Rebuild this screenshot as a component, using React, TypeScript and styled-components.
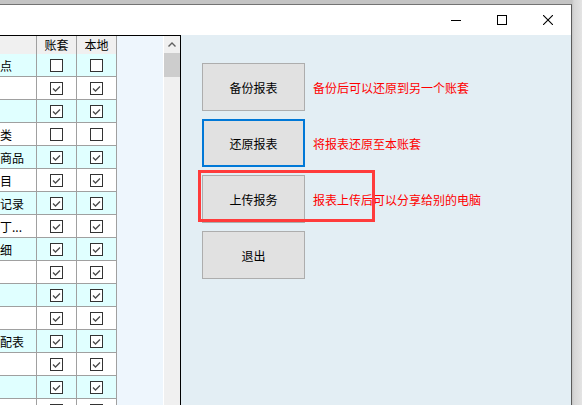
import React from 'react'
import styled, { createGlobalStyle } from 'styled-components'

type Item = { name: string; book: boolean; local: boolean }

// visible tail of each name: the grid is scrolled to the right
const items: Item[] = [
  { name: '点', book: false, local: false },
  { name: '', book: true, local: true },
  { name: '', book: true, local: true },
  { name: '类', book: false, local: false },
  { name: '商品', book: true, local: true },
  { name: '目', book: true, local: true },
  { name: '记录', book: true, local: true },
  { name: '丁...', book: true, local: true },
  { name: '细', book: true, local: true },
  { name: '', book: true, local: true },
  { name: '', book: true, local: true },
  { name: '', book: true, local: true },
  { name: '配表', book: true, local: true },
  { name: '', book: true, local: true },
  { name: '', book: true, local: true },
  { name: '点', book: true, local: true },
]

const actions = [
  { label: '备份报表', hint: '备份后可以还原到另一个账套', focused: false },
  { label: '还原报表', hint: '将报表还原至本账套', focused: true },
  { label: '上传报务', hint: '报表上传后可以分享给别的电脑', focused: false },
  { label: '退出', hint: '', focused: false },
]

const CheckBox = ({ checked }: { checked: boolean }) => (
  <svg width='13' height='13' viewBox='0 0 13 13'>
    <rect x='0.5' y='0.5' width='12' height='12' fill='#fff' stroke='#333' />
    {checked && <path d='M3 6.5 L5.5 9 L10 4.5' fill='none' stroke='#4a4a4a' strokeWidth='1.3' />}
  </svg>
)

export default function App() {
  return (
    <>
      <GlobalStyle />
      <Div_Window>
        <Div_TitleBar>
          <Div_Control>
            <svg width='10' height='10' viewBox='0 0 10 10'>
              <path d='M0 5.5 H10' stroke='#000' />
            </svg>
          </Div_Control>
          <Div_Control>
            <svg width='10' height='10' viewBox='0 0 10 10'>
              <rect x='0.5' y='0.5' width='9' height='9' fill='none' stroke='#000' />
            </svg>
          </Div_Control>
          <Div_Control>
            <svg width='10' height='10' viewBox='0 0 10 10'>
              <path d='M0 0 L10 10 M10 0 L0 10' stroke='#000' strokeWidth='1.1' />
            </svg>
          </Div_Control>
        </Div_TitleBar>
        <Div_Content>
          <Div_LeftPanel>
            <Div_GridArea>
              <Div_Table>
                <Div_HeaderRow>
                  <Div_HeaderCell />
                  <Div_HeaderCell>账套</Div_HeaderCell>
                  <Div_HeaderCell>本地</Div_HeaderCell>
                </Div_HeaderRow>
                {items.map((item, i) => (
                  <Div_Row key={i} $striped={i % 2 === 0}>
                    <Div_NameCell>{item.name}</Div_NameCell>
                    <Div_CheckCell>
                      <CheckBox checked={item.book} />
                    </Div_CheckCell>
                    <Div_CheckCell>
                      <CheckBox checked={item.local} />
                    </Div_CheckCell>
                  </Div_Row>
                ))}
              </Div_Table>
            </Div_GridArea>
            <Div_Scrollbar>
              <Div_ScrollArrow>
                <svg width='8' height='5' viewBox='0 0 8 5'>
                  <path d='M0.5 4.5 L4 1 L7.5 4.5' fill='none' stroke='#606060' strokeWidth='1.4' />
                </svg>
              </Div_ScrollArrow>
              <Div_ScrollThumb />
            </Div_Scrollbar>
          </Div_LeftPanel>
          <Div_RightPanel>
            {actions.map(a => (
              <Div_ActionRow key={a.label}>
                <Button_Action $focused={a.focused}>{a.label}</Button_Action>
                {a.hint && <Span_Hint>{a.hint}</Span_Hint>}
              </Div_ActionRow>
            ))}
            <Div_Annotation />
          </Div_RightPanel>
        </Div_Content>
      </Div_Window>
    </>
  )
}

const GlobalStyle = createGlobalStyle`
  html, body {
    margin: 0;
    padding: 0;
  }
  body {
    width: 582px;
    height: 405px;
    overflow: hidden;
    background: linear-gradient(to right, #c4c4c4 0, #c4c4c4 572px, #d6d6d6 574px, #e4e4e4 582px);
    font-family: "Noto Sans CJK SC", "Noto Sans", sans-serif;
    font-size: 12px;
  }
`

const Div_Window = styled.div`
  margin-top: 4px;
  width: 572px;
  height: 401px;
  box-sizing: border-box;
  border-top: 1px solid #737373;
  border-right: 1px solid #5a5a5a;
  background: #fff;
  display: flex;
  flex-direction: column;
`

const Div_TitleBar = styled.div`
  height: 30px;
  flex-shrink: 0;
  display: flex;
  justify-content: flex-end;
  background: #fff;
`

const Div_Control = styled.div`
  width: 46px;
  height: 30px;
  display: flex;
  align-items: center;
  justify-content: center;
`

const Div_Content = styled.div`
  flex: 1;
  min-height: 0;
  display: flex;
`

const Div_LeftPanel = styled.div`
  width: 181px;
  flex-shrink: 0;
  box-sizing: border-box;
  border-top: 1px solid #000;
  border-right: 1px solid #000;
  display: flex;
  overflow: hidden;
`

const Div_GridArea = styled.div`
  flex: 1;
  background: #eef6fd;
  overflow: hidden;
`

const Div_Table = styled.div`
  width: 117px;
`

const Div_HeaderRow = styled.div`
  display: grid;
  grid-template-columns: 37px 40px 40px;
  height: 18px;
  background: #f0f0f0;
`

const Div_HeaderCell = styled.div`
  box-sizing: border-box;
  border-right: 1px solid #a0a0a0;
  display: flex;
  align-items: center;
  justify-content: center;
  line-height: 1;
  color: #000;
`

const Div_Row = styled.div<{ $striped: boolean }>`
  display: grid;
  grid-template-columns: 37px 40px 40px;
  height: 23px;
  background: ${p => (p.$striped ? '#e0ffff' : '#ffffff')};
`

const Div_NameCell = styled.div`
  box-sizing: border-box;
  border-right: 1px solid #a0a0a0;
  border-bottom: 1px solid #a0a0a0;
  display: flex;
  align-items: center;
  white-space: nowrap;
  color: #000;
`

const Div_CheckCell = styled.div`
  box-sizing: border-box;
  border-right: 1px solid #a0a0a0;
  border-bottom: 1px solid #a0a0a0;
  display: flex;
  align-items: center;
  justify-content: center;
  svg {
    display: block;
  }
`

const Div_Scrollbar = styled.div`
  width: 17px;
  flex-shrink: 0;
  box-sizing: border-box;
  border-left: 1px solid #fff;
  background: #f0f0f0;
  display: flex;
  flex-direction: column;
`

const Div_ScrollArrow = styled.div`
  height: 17px;
  display: flex;
  align-items: center;
  justify-content: center;
`

const Div_ScrollThumb = styled.div`
  height: 24px;
  background: #cdcdcd;
`

const Div_RightPanel = styled.div`
  position: relative;
  flex: 1;
  background: #e3eef4;
  padding: 28px 0 0 21px;
  display: flex;
  flex-direction: column;
  gap: 8px;
`

const Div_ActionRow = styled.div`
  display: flex;
  align-items: center;
  gap: 8px;
`

const Button_Action = styled.button<{ $focused: boolean }>`
  width: 103px;
  height: 48px;
  box-sizing: border-box;
  margin: 0;
  padding: 0;
  border: ${p => (p.$focused ? '2px solid #0078d7' : '1px solid #adadad')};
  background: #e1e1e1;
  font-family: inherit;
  font-size: 12px;
  color: #000;
`

const Span_Hint = styled.span`
  color: #ff0000;
  font-size: 12px;
  white-space: nowrap;
`

const Div_Annotation = styled.div`
  position: absolute;
  left: 17px;
  top: 135px;
  width: 177px;
  height: 52px;
  box-sizing: border-box;
  border: 3px solid #ff3b3b;
  pointer-events: none;
`
